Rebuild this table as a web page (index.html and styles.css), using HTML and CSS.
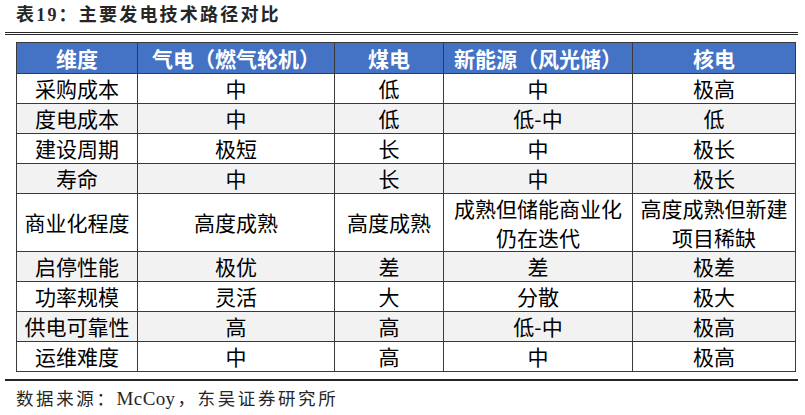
FILE: index.html
```html
<!DOCTYPE html>
<html lang="zh-CN">
<head>
<meta charset="utf-8">
<title>表19：主要发电技术路径对比</title>
<link rel="stylesheet" href="styles.css">
</head>
<body>
<div class="page">
  <h1 class="title">表19：主要发电技术路径对比</h1>
  <div class="rule-top"></div>
  <table class="cmp">
    <colgroup>
      <col class="c1"><col class="c2"><col class="c3"><col class="c4"><col class="c5">
    </colgroup>
    <thead>
      <tr><th>维度</th><th>气电（燃气轮机）</th><th>煤电</th><th>新能源（风光储）</th><th>核电</th></tr>
    </thead>
    <tbody>
      <tr><td>采购成本</td><td>中</td><td>低</td><td>中</td><td>极高</td></tr>
      <tr class="alt"><td>度电成本</td><td>中</td><td>低</td><td>低-中</td><td>低</td></tr>
      <tr><td>建设周期</td><td>极短</td><td>长</td><td>中</td><td>极长</td></tr>
      <tr class="alt"><td>寿命</td><td>中</td><td>长</td><td>中</td><td>极长</td></tr>
      <tr><td>商业化程度</td><td>高度成熟</td><td>高度成熟</td><td>成熟但储能商业化<br>仍在迭代</td><td>高度成熟但新建<br>项目稀缺</td></tr>
      <tr class="alt"><td>启停性能</td><td>极优</td><td>差</td><td>差</td><td>极差</td></tr>
      <tr><td>功率规模</td><td>灵活</td><td>大</td><td>分散</td><td>极大</td></tr>
      <tr class="alt"><td>供电可靠性</td><td>高</td><td>高</td><td>低-中</td><td>极高</td></tr>
      <tr><td>运维难度</td><td>中</td><td>高</td><td>中</td><td>极高</td></tr>
    </tbody>
  </table>
  <div class="rule-bottom"></div>
  <p class="source">数据来源：<span class="latin">McCoy</span>，东吴证券研究所</p>
</div>
</body>
</html>
```
FILE: styles.css
```css
html, body {
  margin: 0;
  padding: 0;
  background: #ffffff;
}

.page {
  width: 793px;
  margin: 0 0 0 5px;
}

.title {
  margin: 0;
  padding: 4px 0 0 11px;
  height: 28px;
  font-family: "Liberation Serif", "Noto Sans CJK SC", serif;
  font-size: 18px;
  line-height: 22px;
  font-weight: bold;
  letter-spacing: 2.2px;
  color: #262626;
}

.rule-top {
  border-top: 3px double #262626;
  height: 0;
}

.cmp {
  margin: 7px 0 0 11px;
  width: 779px;
  border-collapse: collapse;
  table-layout: fixed;
  font-family: "Noto Sans CJK SC", "Noto Sans", sans-serif;
  font-size: 21px;
  color: #000000;
}

.c1 { width: 121px; }
.c2 { width: 197px; }
.c3 { width: 109px; }
.c4 { width: 189px; }
.c5 { width: 163px; }

.cmp th,
.cmp td {
  border: 1px solid #3a3a3a;
  padding: 0;
  text-align: center;
  white-space: nowrap;
  overflow: hidden;
}

.cmp th {
  background: #4472c4;
  color: #ffffff;
  font-weight: bold;
  line-height: 30px;
}

.cmp td {
  line-height: 28.9px;
}

.cmp tr.alt td {
  background: #f2f2f2;
}

.rule-bottom {
  margin-top: 7px;
  border-top: 2px solid #262626;
  height: 0;
}

.source {
  margin: 0;
  padding: 2px 0 0 11px;
  font-family: "Liberation Serif", "Noto Sans CJK SC", serif;
  font-size: 17.5px;
  line-height: 32px;
  letter-spacing: 2.6px;
  color: #262626;
}

.source .latin {
  font-size: 19px;
  letter-spacing: 0.4px;
  margin-right: 2px;
}
```
